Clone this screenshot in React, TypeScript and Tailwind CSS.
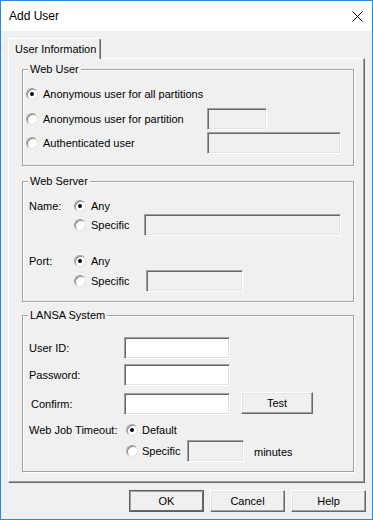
import type { ReactNode } from "react";

const sunken =
  "border border-t-[#a0a0a0] border-l-[#a0a0a0] border-b-white border-r-white shadow-[inset_1px_1px_0_#696969,inset_-1px_-1px_0_#e3e3e3]";

function Radio({ checked }: { checked?: boolean }) {
  return (
    <span className="relative w-[12px] h-[12px] shrink-0 rounded-full bg-white border border-t-[#a0a0a0] border-l-[#a0a0a0] border-b-[#e3e3e3] border-r-[#e3e3e3] shadow-[inset_1px_1px_0_#909090] flex items-center justify-center">
      {checked && <span className="w-[4px] h-[4px] rounded-full bg-black" />}
    </span>
  );
}

function Field({ w, white }: { w: string; white?: boolean }) {
  return <div className={`${w} h-[22px] shrink-0 ${sunken} ${white ? "bg-white" : "bg-[#f0f0f0]"}`} />;
}

function Button({ children, primary, w }: { children: ReactNode; primary?: boolean; w: string }) {
  return (
    <button
      className={`${w} h-[22px] shrink-0 flex items-center justify-center bg-[#f0f0f0] text-black ${
        primary
          ? "border border-[#5f5f5f] shadow-[inset_1px_1px_0_#a0a0a0,inset_-1px_-1px_0_#696969]"
          : "border border-t-white border-l-white border-b-[#696969] border-r-[#696969] shadow-[inset_-1px_-1px_0_#a0a0a0,inset_1px_1px_0_#e3e3e3]"
      }`}
    >
      {children}
    </button>
  );
}

function Group({ title, h, className, children }: { title: string; h: string; className?: string; children: ReactNode }) {
  return (
    <div
      className={`relative w-[332px] ${h} border border-[#a0a0a0] shadow-[1px_1px_0_#fff,inset_1px_1px_0_#fff] flex flex-col ${className ?? ""}`}
    >
      <span className="absolute left-[5px] top-[-8px] px-[2px] bg-[#f0f0f0] leading-[14px]">{title}</span>
      {children}
    </div>
  );
}

export default function App() {
  return (
    <div className="w-[373px] h-[520px] border border-[#2b88d8] bg-[#f0f0f0] flex flex-col text-[11px] text-black font-['Liberation_Sans',Arial,sans-serif]">
      {/* Title bar */}
      <div className="h-[30px] bg-white flex items-center justify-between pl-[8px] pr-[9px]">
        <span className="text-[12px]">Add User</span>
        <svg width="11" height="11" viewBox="0 0 11 11" className="mt-[1px]">
          <path d="M0.5 0.5 L10.5 10.5 M10.5 0.5 L0.5 10.5" stroke="#000" strokeWidth="1" />
        </svg>
      </div>

      <div className="flex flex-col pl-[7px] pt-[7px]">
        {/* Tab */}
        <div className="relative z-10 w-[93px] h-[21px] bg-[#f0f0f0] rounded-t-[2px] border-l border-t border-r border-l-white border-t-white border-r-[#696969] shadow-[inset_-1px_0_0_#a0a0a0] flex items-center pl-[6px]">
          User Information
        </div>

        {/* Tab panel */}
        <div className="w-[357px] h-[425px] mt-[-1px] border border-t-white border-l-white border-b-[#696969] border-r-[#696969] shadow-[inset_-1px_-1px_0_#a0a0a0] pl-[13px] pt-[10px] flex flex-col">
          <Group title="Web User" h="h-[97px]">
            <div className="flex items-center h-[22px] mt-[13px] pl-[3px]">
              <Radio checked />
              <span className="ml-[5px]">Anonymous user for all partitions</span>
            </div>
            <div className="flex items-center h-[22px] mt-[3px] pl-[3px]">
              <Radio />
              <span className="w-[169px] pl-[5px]">Anonymous user for partition</span>
              <Field w="w-[60px]" />
            </div>
            <div className="flex items-center h-[22px] mt-[2px] pl-[3px]">
              <Radio />
              <span className="w-[169px] pl-[5px]">Authenticated user</span>
              <Field w="w-[134px]" />
            </div>
          </Group>

          <Group title="Web Server" h="h-[121px]" className="mt-[15px]">
            <div className="flex items-center h-[16px] mt-[16px] pl-[6px]">
              <span className="w-[45px]">Name:</span>
              <Radio checked />
              <span className="ml-[5px]">Any</span>
            </div>
            <div className="flex items-center h-[22px] pl-[51px]">
              <Radio />
              <span className="w-[58px] pl-[5px]">Specific</span>
              <Field w="w-[197px]" />
            </div>
            <div className="flex items-center h-[16px] mt-[17px] pl-[6px]">
              <span className="w-[45px]">Port:</span>
              <Radio checked />
              <span className="ml-[5px]">Any</span>
            </div>
            <div className="flex items-center h-[22px] mt-[1px] pl-[51px]">
              <Radio />
              <span className="w-[60px] pl-[5px]">Specific</span>
              <Field w="w-[97px]" />
            </div>
          </Group>

          <Group title="LANSA System" h="h-[157px]" className="mt-[13px]">
            <div className="flex items-center h-[22px] mt-[21px] pl-[6px]">
              <span className="w-[95px]">User ID:</span>
              <Field w="w-[106px]" white />
            </div>
            <div className="flex items-center h-[22px] mt-[5px] pl-[6px]">
              <span className="w-[95px]">Password:</span>
              <Field w="w-[106px]" white />
            </div>
            <div className="flex items-start h-[22px] mt-[7px] pl-[8px]">
              <span className="w-[93px] leading-[22px]">Confirm:</span>
              <Field w="w-[106px]" white />
              <div className="ml-[11px] mt-[-1px]">
                <Button w="w-[72px]">Test</Button>
              </div>
            </div>
            <div className="flex items-center h-[16px] mt-[7px] pl-[6px]">
              <span className="w-[97px]">Web Job Timeout:</span>
              <Radio checked />
              <span className="ml-[4px]">Default</span>
            </div>
            <div className="flex items-center h-[22px] mt-[2px] pl-[103px]">
              <Radio />
              <span className="w-[49px] pl-[4px]">Specific</span>
              <Field w="w-[57px]" />
              <span className="ml-[10px] mt-[3px]">minutes</span>
            </div>
          </Group>
        </div>

        {/* Dialog buttons */}
        <div className="flex gap-[6px] mt-[7px] pl-[121px]">
          <Button w="w-[75px]" primary>OK</Button>
          <Button w="w-[75px]">Cancel</Button>
          <Button w="w-[75px]">Help</Button>
        </div>
      </div>
    </div>
  );
}
